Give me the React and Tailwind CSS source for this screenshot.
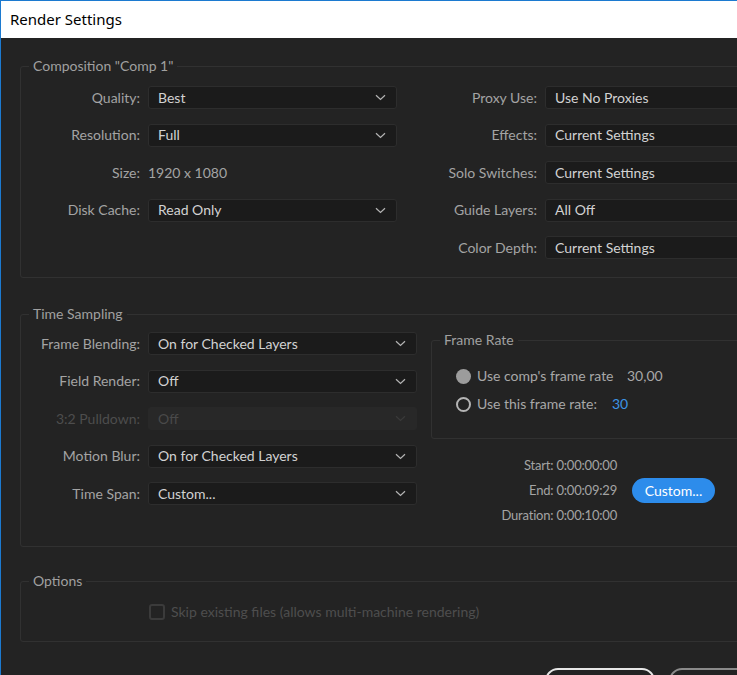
import React from "react";

const font = { fontFamily: "Lato, 'Noto Sans', sans-serif" };

function Chevron({ dim }) {
  return (
    <svg width="11" height="7" viewBox="0 0 11 7" className="shrink-0">
      <path d="M1 1.2 L5.5 5.5 L10 1.2" fill="none" stroke={dim ? "#3a3a3a" : "#b4b4b4"} strokeWidth="1.2" />
    </svg>
  );
}

function Dropdown({ value, width, disabled, noChevron }) {
  return (
    <div
      className={
        "h-[23px] flex items-center justify-between pl-[9px] pr-[10px] rounded-[3px] border " +
        (disabled ? "bg-[#282828] border-[#282828] text-[#4a4a4a]" : "bg-[#1b1b1b] border-[#2d2d2d] text-[#d2d2d2]")
      }
      style={{ width }}
    >
      <span className="-mt-[1px]">{value}</span>
      {!noChevron && <Chevron dim={disabled} />}
    </div>
  );
}

function Row({ label, labelW, children, disabled }) {
  return (
    <div className="flex items-center h-[23px]">
      <div
        className={"text-right pr-[8px] shrink-0 -mt-[1px] " + (disabled ? "text-[#4d4d4d]" : "text-[#a4a4a4]")}
        style={{ width: labelW }}
      >
        {label}
      </div>
      {children}
    </div>
  );
}

function Group({ title, className = "", children }) {
  return (
    <fieldset className={"border border-[#313131] rounded-[3px] " + className}>
      <legend className="ml-[8px] px-[4px] leading-[20px] text-[#a0a0a0]">{title}</legend>
      {children}
    </fieldset>
  );
}

export default function App() {
  return (
    <div
      className="w-[737px] h-[675px] overflow-hidden bg-[#232323] border-l border-t border-[#1c7ad0] text-[14px]"
      style={font}
    >
      <div
        className="h-[37px] bg-white flex items-center pl-[9px] text-[15px] text-black"
        style={{ fontFamily: "'Noto Sans', sans-serif" }}
      >
        Render Settings
      </div>

      <div className="pl-[19px] pt-[18px] w-[800px]">
        {/* Composition */}
        <Group title={'Composition "Comp 1"'} className="w-[780px] pt-[10px] pb-[18px]">
          <div className="flex">
            <div className="flex flex-col gap-[14.5px] w-[377px]">
              <Row label="Quality:" labelW={127}>
                <Dropdown value="Best" width={249} />
              </Row>
              <Row label="Resolution:" labelW={127}>
                <Dropdown value="Full" width={249} />
              </Row>
              <Row label="Size:" labelW={127}>
                <span className="text-[#a4a4a4] -mt-[1px]">1920 x 1080</span>
              </Row>
              <Row label="Disk Cache:" labelW={127}>
                <Dropdown value="Read Only" width={249} />
              </Row>
            </div>
            <div className="flex flex-col gap-[14.5px]">
              <Row label="Proxy Use:" labelW={147}>
                <Dropdown value="Use No Proxies" width={260} />
              </Row>
              <Row label="Effects:" labelW={147}>
                <Dropdown value="Current Settings" width={260} />
              </Row>
              <Row label="Solo Switches:" labelW={147}>
                <Dropdown value="Current Settings" width={260} />
              </Row>
              <Row label="Guide Layers:" labelW={147}>
                <Dropdown value="All Off" width={260} />
              </Row>
              <Row label="Color Depth:" labelW={147}>
                <Dropdown value="Current Settings" width={260} />
              </Row>
            </div>
          </div>
        </Group>

        {/* Time Sampling */}
        <Group title="Time Sampling" className="w-[780px] mt-[26px] pt-[6px] pb-[18px]">
          <div className="flex">
            <div className="flex flex-col gap-[14.5px] w-[397px] pt-[2px]">
              <Row label="Frame Blending:" labelW={127}>
                <Dropdown value="On for Checked Layers" width={269} />
              </Row>
              <Row label="Field Render:" labelW={127}>
                <Dropdown value="Off" width={269} />
              </Row>
              <Row label="3:2 Pulldown:" labelW={127} disabled>
                <Dropdown value="Off" width={269} disabled />
              </Row>
              <Row label="Motion Blur:" labelW={127}>
                <Dropdown value="On for Checked Layers" width={269} />
              </Row>
              <Row label="Time Span:" labelW={127}>
                <Dropdown value="Custom..." width={269} />
              </Row>
            </div>
            <div className="ml-[13px] flex flex-col">
              <Group title="Frame Rate" className="w-[360px] pt-[16px] pb-[24px]">
                <div className="flex flex-col gap-[8px] pl-[24px]">
                  <div className="flex items-center h-[20px]">
                    <span className="w-[15px] h-[15px] rounded-full bg-[#9c9c9c] shrink-0" />
                    <span className="ml-[6px] text-[#a8a8a8] w-[150px] -mt-[1px]">Use comp's frame rate</span>
                    <span className="text-[#a8a8a8] -mt-[1px]">30,00</span>
                  </div>
                  <div className="flex items-center h-[20px]">
                    <span className="w-[15px] h-[15px] rounded-full border-2 border-[#b4b4b4] shrink-0" />
                    <span className="ml-[6px] text-[#a8a8a8] w-[135px] -mt-[1px]">Use this frame rate:</span>
                    <span className="text-[#3d94e6] -mt-[1px]">30</span>
                  </div>
                </div>
              </Group>
              <div className="flex items-center mt-[14px]">
                <div className="w-[186px] flex flex-col items-end text-[13px] tracking-[-0.2px] text-[#a4a4a4] leading-[25px]">
                  <span>Start: 0:00:00:00</span>
                  <span>End: 0:00:09:29</span>
                  <span>Duration: 0:00:10:00</span>
                </div>
                <button className="ml-[15px] w-[83px] h-[25px] rounded-full bg-[#2d8ceb] text-white text-[14px]">
                  Custom...
                </button>
              </div>
            </div>
          </div>
        </Group>

        {/* Options */}
        <Group title="Options" className="w-[780px] mt-[24px] pt-[11px] pb-[19px]">
          <div className="flex items-center pl-[128px]">
            <span className="w-[16px] h-[16px] rounded-[3px] border-2 border-[#3b3b3b] shrink-0" />
            <span className="ml-[6px] text-[#4e4e4e] -mt-[1px]">Skip existing files (allows multi-machine rendering)</span>
          </div>
        </Group>

        <div className="flex gap-[14px] mt-[26px] pl-[525px]">
          <button className="w-[110px] h-[26px] rounded-[13px] border-2 border-[#e6e6e6] text-white shrink-0" />
          <button className="w-[110px] h-[26px] rounded-[13px] border-2 border-[#8a8a8a] text-white shrink-0" />
        </div>
      </div>
    </div>
  );
}
